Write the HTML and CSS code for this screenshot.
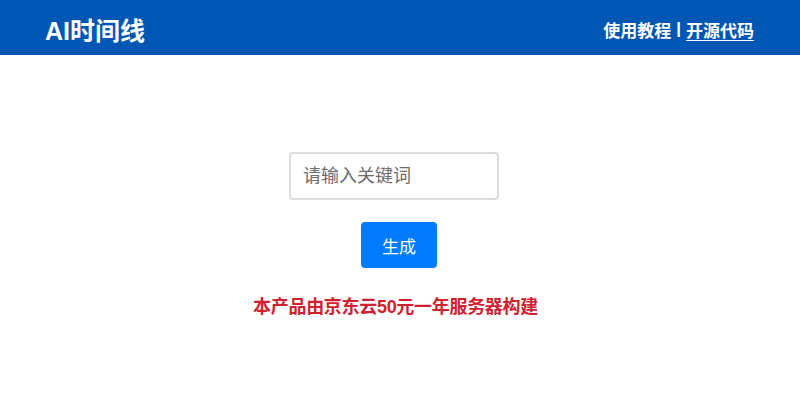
FILE: index.html
```html
<!DOCTYPE html>
<html lang="zh">
<head>
<meta charset="utf-8">
<title>AI时间线</title>
<link rel="stylesheet" href="styles.css">
</head>
<body>
<header class="topbar">
  <div class="brand">AI时间线</div>
  <nav class="links"><a class="link plain" href="#">使用教程</a><span class="sep">|</span><a class="link" href="#">开源代码</a></nav>
</header>
<main class="main">
  <input class="keyword" type="text" placeholder="请输入关键词">
  <button class="gen">生成</button>
  <p class="notice">本产品由京东云50元一年服务器构建</p>
</main>
</body>
</html>
```
FILE: styles.css
```css
html, body {
  margin: 0;
  padding: 0;
  background: #ffffff;
  font-family: "Helvetica Neue", "Liberation Sans", "Noto Sans CJK SC", sans-serif;
}
.topbar {
  height: 55px;
  background: #0056b3;
  display: flex;
  align-items: center;
  justify-content: space-between;
  padding: 3px 46px 0 45px;
  box-sizing: border-box;
  color: #ffffff;
}
.brand {
  font-size: 25px;
  font-weight: bold;
}
.links {
  font-size: 17px;
  font-weight: bold;
  display: flex;
  align-items: center;
  gap: 5px;
}
.link {
  color: #ffffff;
  text-decoration: underline;
  text-underline-offset: 3px;
}
.link.plain {
  text-decoration: none;
}
.main {
  display: flex;
  flex-direction: column;
  align-items: center;
  padding-top: 97px;
}
.keyword {
  width: 210px;
  height: 48px;
  box-sizing: border-box;
  border: 2px solid #dcdcdc;
  border-radius: 4px;
  padding: 0 12px;
  font-size: 18px;
  font-family: inherit;
  color: #333;
  outline: none;
  margin-left: -12px;
}
.keyword::placeholder {
  color: #6c6c6c;
}
.gen {
  margin-top: 22px;
  margin-left: -2px;
  width: 76px;
  height: 46px;
  border: none;
  border-radius: 4px;
  background: #007bff;
  color: #ffffff;
  font-size: 17px;
  font-family: inherit;
  cursor: pointer;
}
.notice {
  margin: 24px 0 0 0;
  color: #d3202f;
  font-size: 18px;
  font-weight: bold;
  letter-spacing: -0.3px;
  margin-left: -9px;
}
```
